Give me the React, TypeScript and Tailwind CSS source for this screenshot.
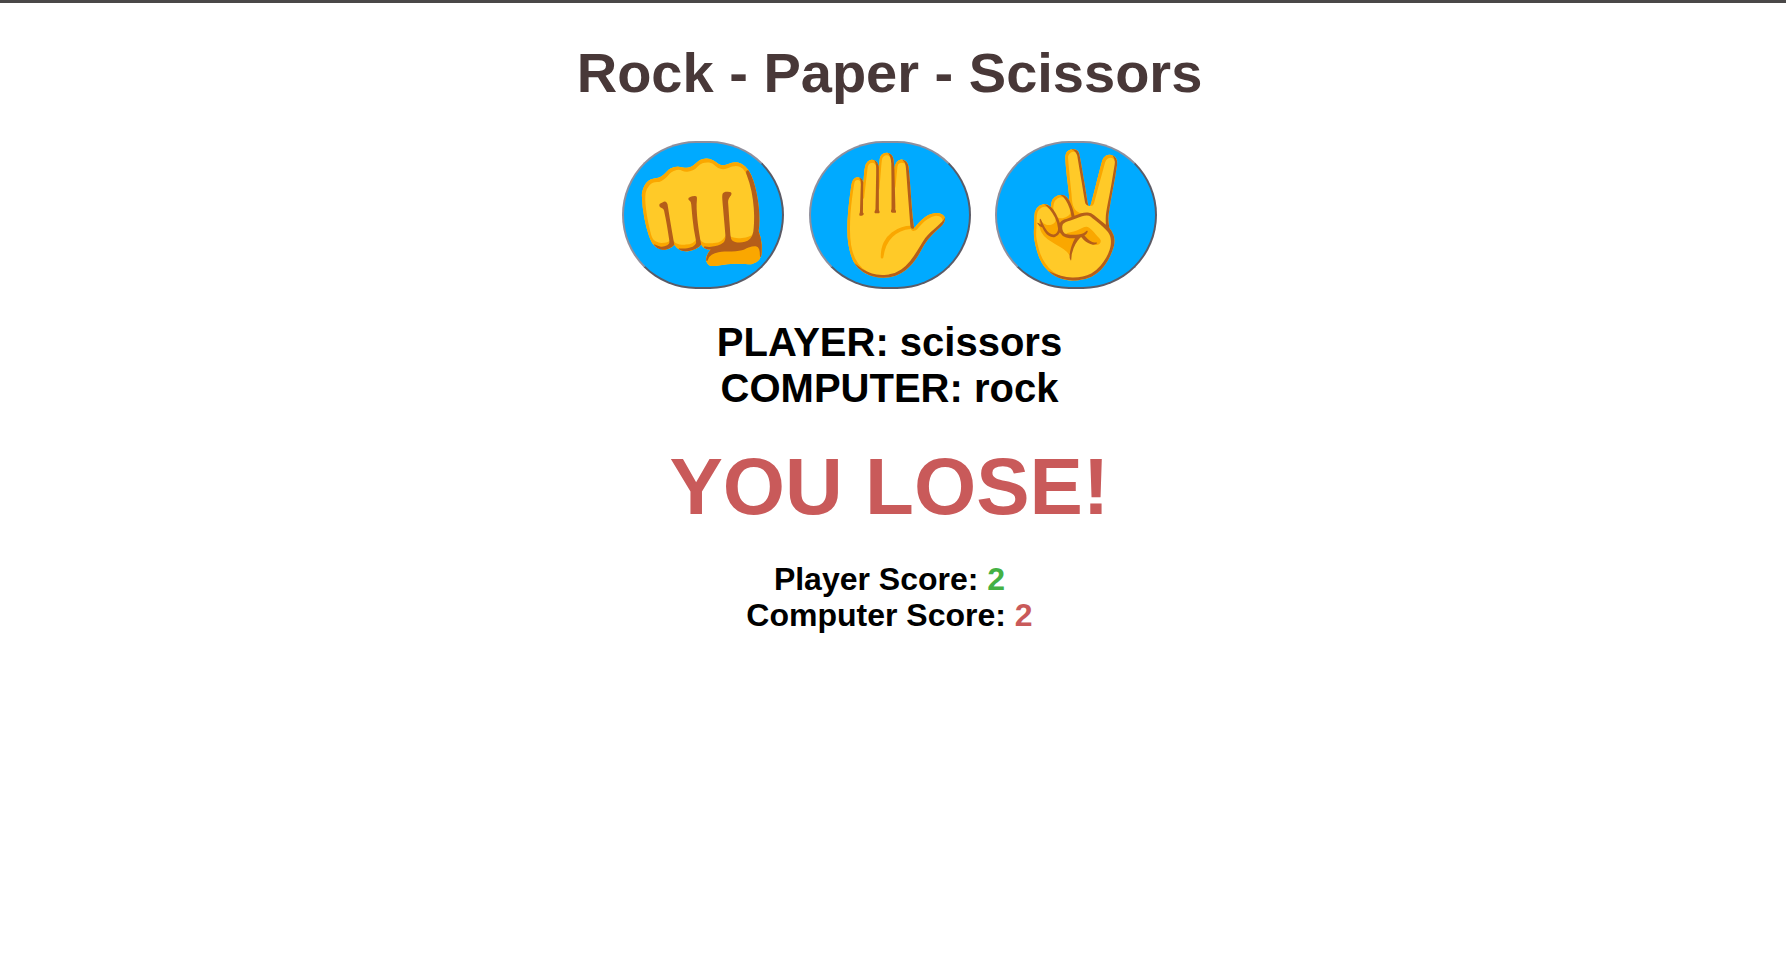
const choices = ["👊", "✋", "✌️"];

export default function App() {
  return (
    <div className="flex min-h-screen flex-col items-center border-t-[3px] border-[#4a4848] bg-white pr-[7px] font-['Liberation_Sans',Arial,sans-serif] font-bold text-black">
      <h1 className="mt-[38px] text-[56px] leading-[64px] text-[#483838]">Rock - Paper - Scissors</h1>
      <div className="mt-[36px] flex gap-[24.5px]">
        {choices.map((c) => (
          <button key={c} className="flex h-[148px] w-[162px] items-center justify-center rounded-[200px] border-2 border-t-[#8f8f9d] border-r-[#5b5b66] border-b-[#5b5b66] border-l-[#8f8f9d] bg-[#00aaff] pr-[0.5px] pb-[2px] text-[120px] font-normal leading-none">{c}</button>
        ))}
      </div>
      <div className="mt-[30px] text-[40px] leading-[46px]">PLAYER: scissors</div>
      <div className="text-[40px] leading-[46px]">COMPUTER: rock</div>
      <div className="mt-[30px] text-[80px] leading-[92px] text-[#c95a5a]">YOU LOSE!</div>
      <div className="mt-[28px] text-[32px] leading-[36px]">Player Score: <span className="text-[#44b144]">2</span></div>
      <div className="text-[32px] leading-[36px]">Computer Score: <span className="text-[#c95a5a]">2</span></div>
    </div>
  );
}
